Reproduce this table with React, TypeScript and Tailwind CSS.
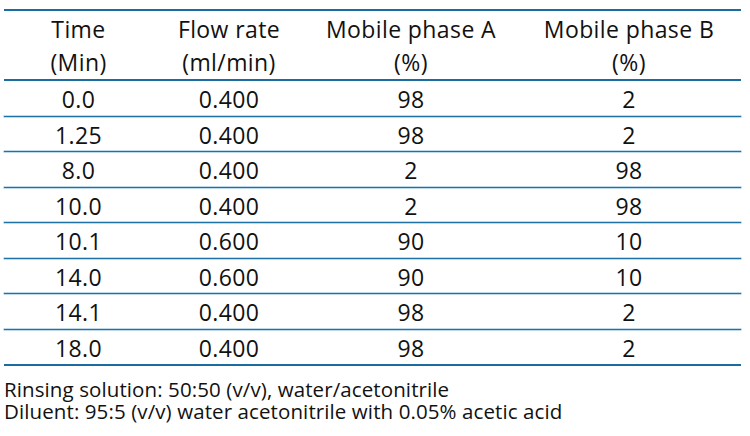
import React from "react";

const rows: [string, string, string, string][] = [
  ["0.0", "0.400", "98", "2"],
  ["1.25", "0.400", "98", "2"],
  ["8.0", "0.400", "2", "98"],
  ["10.0", "0.400", "2", "98"],
  ["10.1", "0.600", "90", "10"],
  ["14.0", "0.600", "90", "10"],
  ["14.1", "0.400", "98", "2"],
  ["18.0", "0.400", "98", "2"],
];

const cols = "grid grid-cols-[149px_152px_212px_224px]";

export default function App() {
  return (
    <div
      className="w-[750px] h-[436px] bg-white text-[#111] overflow-hidden"
      style={{ fontFamily: '"Open Sans", "Noto Sans", sans-serif' }}
    >
      <div className="pt-[9px] pl-[4px] w-[741px]">
        <div className="h-[2px] bg-[#1b6c9f]" />
        <div className={`${cols} pt-[2px] text-[23px] leading-[33px] tracking-[0.4px] text-center`}>
          <div>Time<br />(Min)</div>
          <div>Flow rate<br />(ml/min)</div>
          <div>Mobile phase A<br />(%)</div>
          <div>Mobile phase B<br />(%)</div>
        </div>
        <div className="h-[2px] bg-[#1b6c9f]" />
        {rows.map((r, i) => (
          <div key={i}>
            <div className={`${cols} h-[34.5px] pt-[1px] text-[23px] leading-[34.5px] tracking-[0.4px] text-center`}>
              {r.map((c, j) => (
                <div key={j}>{c}</div>
              ))}
            </div>
            {i < rows.length - 1 ? (
              <div className="h-[1px] bg-[#1f72a6] shadow-[0_0_0_0.5px_#7fb3d4]" />
            ) : (
              <div className="h-[2px] bg-[#1b6c9f]" />
            )}
          </div>
        ))}
        <div className="mt-[13px] text-[20.5px] leading-[21.5px] tracking-[0.1px]">
          <div>Rinsing solution: 50:50 (v/v), water/acetonitrile</div>
          <div>Diluent: 95:5 (v/v) water acetonitrile with 0.05% acetic acid</div>
        </div>
      </div>
    </div>
  );
}
